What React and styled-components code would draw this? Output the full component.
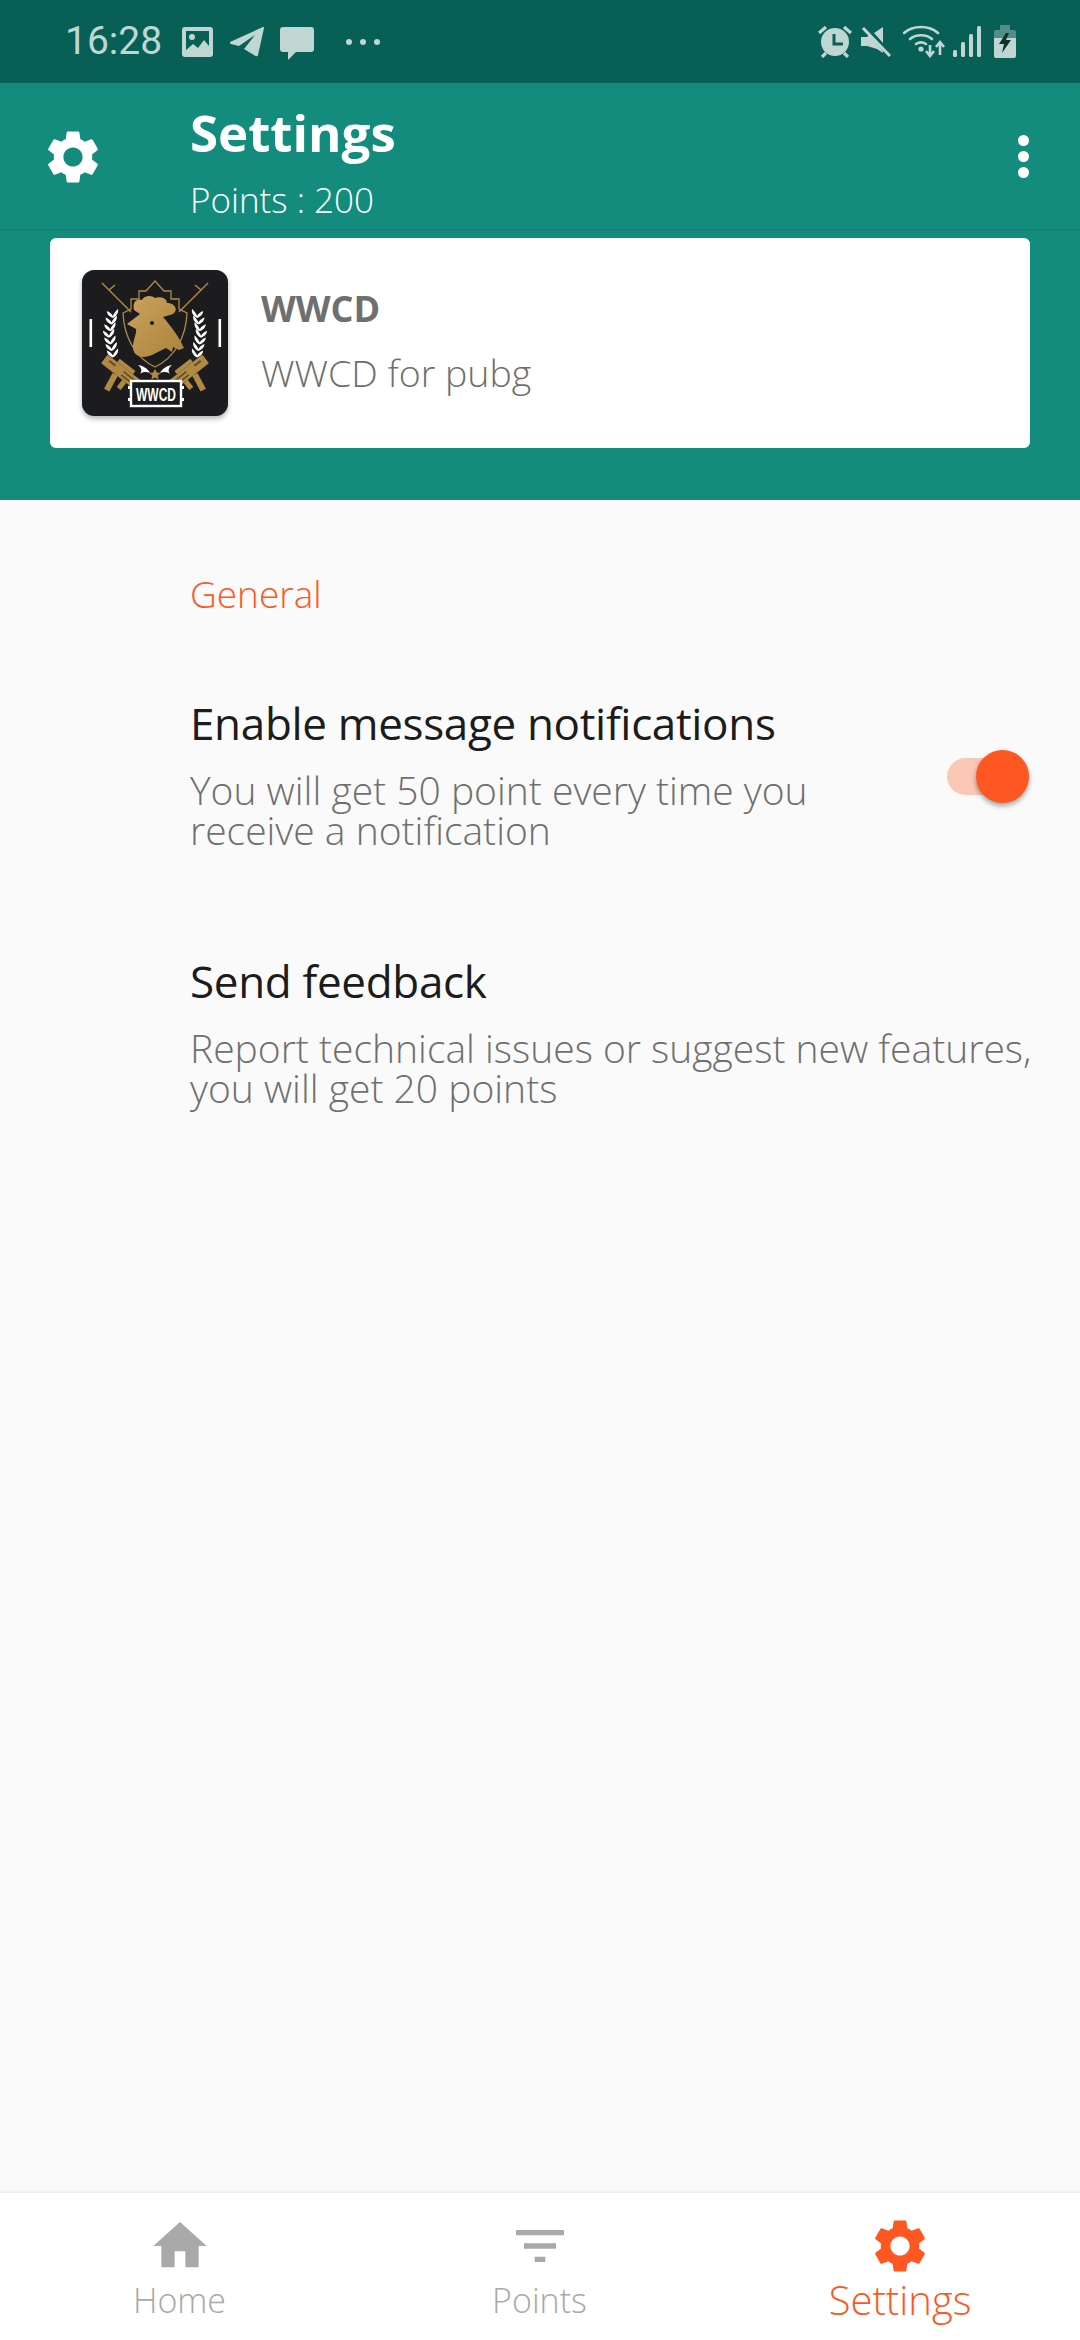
import React from "react";
import styled, { createGlobalStyle } from "styled-components";

const GlobalStyle = createGlobalStyle`
  html, body {
    margin: 0;
    padding: 0;
    background: #fafafa;
  }
  * {
    box-sizing: border-box;
  }
`;

const GEAR =
  "M19.14 12.94c.04-.3.06-.61.06-.94 0-.32-.02-.64-.07-.94l2.03-1.58c.18-.14.23-.41.12-.61l-1.92-3.32c-.12-.22-.37-.29-.59-.22l-2.39.96c-.5-.38-1.03-.7-1.62-.94l-.36-2.54c-.04-.24-.24-.41-.48-.41h-3.84c-.24 0-.43.17-.47.41l-.36 2.54c-.59.24-1.13.57-1.62.94l-2.39-.96c-.22-.08-.47 0-.59.22L2.74 8.87c-.12.21-.08.47.12.61l2.03 1.58c-.05.3-.09.63-.09.94s.02.64.07.94l-2.03 1.58c-.18.14-.23.41-.12.61l1.92 3.32c.12.22.37.29.59.22l2.39-.96c.5.38 1.03.7 1.62.94l.36 2.54c.05.24.24.41.48.41h3.84c.24 0 .44-.17.47-.41l.36-2.54c.59-.24 1.13-.56 1.62-.94l2.39.96c.22.08.47 0 .59-.22l1.92-3.32c.12-.22.07-.47-.12-.61l-2.01-1.58zM12 15.6c-1.98 0-3.6-1.62-3.6-3.6s1.62-3.6 3.6-3.6 3.6 1.62 3.6 3.6-1.62 3.6-3.6 3.6z";
const HOME = "M10 20v-6h4v6h5v-8h3L12 3 2 12h3v8z";
const FILTER = "M10 18h4v-2h-4v2zM3 6v2h18V6H3zm3 7h12v-2H6v2z";

const FONT = `"Open Sans", "Noto Sans", sans-serif`;

const Page = styled.div`
  width: 1080px;
  height: 2340px;
  display: flex;
  flex-direction: column;
  background: #fafafa;
  font-family: ${FONT};
  overflow: hidden;
`;

const StatusBar = styled.div`
  height: 83px;
  flex: none;
  background: #085f56;
  display: flex;
  align-items: center;
  justify-content: space-between;
  padding: 0 64px 0 65px;
  color: #bfd6d2;
`;

const StatusGroup = styled.div`
  display: flex;
  align-items: center;
`;

const Clock = styled.span`
  font-family: Roboto, sans-serif;
  font-size: 39px;
  font-weight: 400;
  line-height: 83px;
  width: 117px;
`;

const StatusIcon = styled.svg`
  display: block;
  flex: none;
  margin-left: ${(p) => p.$gap || 0}px;
  margin-top: ${(p) => p.$down || 0}px;
  fill: currentColor;
`;

const Toolbar = styled.header`
  height: 148px;
  flex: none;
  background: #148c7d;
  border-bottom: 2px solid #128376;
  display: flex;
  align-items: center;
  color: #fff;
`;

const ToolbarIconSlot = styled.div`
  width: 190px;
  flex: none;
  padding-left: 41px;
  padding-top: 2px;
`;

const Glyph = styled.svg`
  display: block;
  width: 64px;
  height: 64px;
  fill: currentColor;
`;

const ToolbarText = styled.div`
  flex: 1;
  display: flex;
  flex-direction: column;
  padding-top: 9px;
`;

const ToolbarTitle = styled.h1`
  margin: 0;
  font-size: 51px;
  line-height: 64px;
  font-weight: 700;
`;

const ToolbarPoints = styled.div`
  font-size: 35px;
  line-height: 44px;
  margin-top: 14px;
  font-weight: 300;
`;

const Kebab = styled.div`
  width: 58px;
  margin-right: 28px;
  display: flex;
  flex-direction: column;
  align-items: center;
  gap: 5px;
  span {
    width: 11px;
    height: 11px;
    border-radius: 50%;
    background: #fff;
  }
`;

const Hero = styled.section`
  flex: none;
  background: #148c7d;
  padding: 7px 50px 52px;
`;

const AppCard = styled.div`
  height: 210px;
  background: #fff;
  border-radius: 6px;
  display: flex;
  align-items: center;
  padding-left: 32px;
`;

const AppIcon = styled.div`
  width: 146px;
  height: 146px;
  flex: none;
  border-radius: 12px;
  background: #148c7d;
  box-shadow: 0 3px 5px rgba(0, 0, 0, 0.28);
  svg {
    display: block;
  }
`;

const AppText = styled.div`
  margin-left: 33px;
  color: #6f6f6f;
  margin-top: -4px;
`;

const AppName = styled.div`
  font-size: 36px;
  line-height: 50px;
  font-weight: 700;
`;

const AppDesc = styled.div`
  font-size: 37.5px;
  line-height: 50px;
  margin-top: 14px;
  font-weight: 300;
`;

const Content = styled.main`
  flex: 1;
  padding: 69px 51px 0 190px;
`;

const SectionLabel = styled.div`
  font-size: 37px;
  line-height: 50px;
  font-weight: 300;
  color: #ff5722;
`;

const Row = styled.div`
  display: flex;
  align-items: center;
  margin-top: ${(p) => p.$top}px;
`;

const RowText = styled.div`
  flex: 1;
  white-space: nowrap;
`;

const RowTitle = styled.div`
  font-size: 44px;
  line-height: 56px;
  color: #1c1c1c;
  font-weight: 400;
  letter-spacing: -0.33px;
`;

const RowSub = styled.div`
  margin-top: 19px;
  font-size: 39px;
  line-height: 40px;
  font-weight: 300;
  color: #6f6f6f;
`;

const Switch = styled.div`
  position: relative;
  width: 82px;
  height: 37px;
  margin-top: 8px;
  flex: none;
  border-radius: 19px;
  background: #fcc8b6;
`;

const SwitchKnob = styled.div`
  position: absolute;
  right: 0;
  top: -8px;
  width: 53px;
  height: 53px;
  border-radius: 50%;
  background: #ff5722;
  box-shadow: 0 3px 5px rgba(0, 0, 0, 0.35);
`;

const BottomNav = styled.nav`
  height: 147px;
  flex: none;
  background: #fff;
  display: grid;
  grid-template-columns: 359px 361px 360px;
  box-shadow: 0 -1px 3px rgba(0, 0, 0, 0.08);
  position: relative;
`;

const NavItem = styled.div`
  display: flex;
  flex-direction: column;
  align-items: center;
  padding-top: 21px;
  color: ${(p) => (p.$active ? "#ff5722" : "#a9a9a9")};
`;

const NavLabel = styled.span`
  font-size: ${(p) => (p.$active ? 40 : 34)}px;
  line-height: 46px;
  font-weight: 300;
  margin-top: -1px;
`;

const Laurel = () => (
  <g fill="#fff">
    {[0, 1, 2, 3, 4, 5, 6].map((i) => (
      <g key={i} transform={`translate(${27 + Math.abs(3 - i) * 1.3} ${44 + i * 6.6})`}>
        <path d="M0 4 C-5 2 -6 -1 -6 -3 C-3 -2 -1 0 0 2 C1 -1 3 -3 5 -5 C6 -2 4 2 0 4Z" />
      </g>
    ))}
  </g>
);

const Rifle = () => (
  <g fill="#b08a45">
    <path d="M20 13 L49 42" stroke="#b08a45" strokeWidth="1.5" fill="none" />
    <path d="M27 20 L33 15" stroke="#b08a45" strokeWidth="1.5" fill="none" />
    <g transform="translate(38 103) rotate(38)">
      <rect x="-21" y="-7" width="42" height="11" rx="1" />
      <rect x="-9" y="-11" width="20" height="4" />
      <rect x="-6" y="4" width="6" height="18" transform="rotate(-10 -3 4)" />
      <rect x="6" y="4" width="5" height="9" />
      <rect x="-16" y="-4" width="8" height="2" fill="#5d4a25" />
      <rect x="2" y="-4" width="14" height="1.5" fill="#5d4a25" />
      <rect x="2" y="0" width="14" height="1.5" fill="#5d4a25" />
    </g>
  </g>
);

const WwcdLogo = () => (
  <svg width="146" height="146" viewBox="0 0 146 146">
    <defs>
      <linearGradient id="gold" x1="0" y1="0" x2="1" y2="1">
        <stop offset="0" stopColor="#cda35c" />
        <stop offset="1" stopColor="#a8823e" />
      </linearGradient>
    </defs>
    <rect width="146" height="146" rx="13" fill="#1c1c1e" />
    <rect x="7.5" y="49" width="2.6" height="28" fill="#fff" />
    <rect x="136.5" y="49" width="2.6" height="28" fill="#fff" />
    <Laurel />
    <g transform="matrix(-1 0 0 1 146 0)">
      <Laurel />
      <Rifle />
    </g>
    <Rifle />
    <path
      d="M41 43 L49 39 V29 H57 V21 H64 L73 11 L82 21 H89 V29 H97 V39 L105 43 C104 68 92 88 73 97 C54 88 42 68 41 43Z"
      fill="none"
      stroke="#b08a45"
      strokeWidth="1.3"
    />
    <path
      d="M45 54 L58 44 L52 40 C50 32 55 28 60 30 C62 25 70 25 73 28 C78 26 85 28 85 33 C95 33 97 43 88 45 L81 47 C88 55 96 65 102 78 L97 80 L91 77 L90 82 L84 78 L70 85 C58 90 50 85 51 75 C52 68 55 62 54 59Z"
      fill="url(#gold)"
    />
    <circle cx="70" cy="53" r="2" fill="#1c1c1e" />
    <path d="M56 95 C62 96 66 99 68 103 C63 101 60 102 58 104 C60 101 60 98 56 95Z" fill="#fff" />
    <path d="M90 95 C84 96 80 99 78 103 C83 101 86 102 88 104 C86 101 86 98 90 95Z" fill="#fff" />
    <path d="M73 99 L74.8 102.6 L78.6 103 L75.8 105.6 L76.6 109.4 L73 107.4 L69.4 109.4 L70.2 105.6 L67.4 103 L71.2 102.6Z" fill="#b08a45" />
    <rect x="49" y="111" width="50" height="25" fill="#1c1c1e" stroke="#fff" strokeWidth="2.4" />
    <rect x="46" y="116" width="3" height="3" fill="#fff" />
    <rect x="46" y="128" width="3" height="3" fill="#fff" />
    <rect x="99" y="116" width="3" height="3" fill="#fff" />
    <rect x="99" y="128" width="3" height="3" fill="#fff" />
    <text
      x="74"
      y="131"
      textAnchor="middle"
      fontFamily="'Liberation Sans', sans-serif"
      fontSize="18"
      fontWeight="700"
      fill="#fff"
      textLength="40"
      lengthAdjust="spacingAndGlyphs"
    >
      WWCD
    </text>
  </svg>
);

const App = () => {
  return (
    <Page>
      <GlobalStyle />
      <StatusBar>
        <StatusGroup>
          <Clock>16:28</Clock>
          <StatusIcon width="31" height="30" viewBox="0 0 31 30">
            <path
              fillRule="evenodd"
              d="M3 0h25a3 3 0 0 1 3 3v24a3 3 0 0 1-3 3H3a3 3 0 0 1-3-3V3a3 3 0 0 1 3-3zm1 4v19l7-6 5 4 6-8 5 6V4z"
            />
            <circle cx="10" cy="10" r="3" />
          </StatusIcon>
          <StatusIcon $gap={17} width="34" height="31" viewBox="0 0 34 31">
            <path d="M0 16 L33 1 Q34.5 .5 34 2 L28 29 Q27.5 31 25.5 30 L14 23 L25 9 L9 20 L1 18 Q-1 17 0 16Z" />
          </StatusIcon>
          <StatusIcon $gap={16} $down={3} width="34" height="33" viewBox="0 0 34 33">
            <path d="M3 0h28a3 3 0 0 1 3 3v19a3 3 0 0 1-3 3H16l-8 8v-8H3a3 3 0 0 1-3-3V3a3 3 0 0 1 3-3z" />
          </StatusIcon>
          <StatusIcon $gap={31} width="36" height="8" viewBox="0 0 36 8">
            <circle cx="4" cy="4" r="3" />
            <circle cx="18" cy="4" r="3" />
            <circle cx="32" cy="4" r="3" />
          </StatusIcon>
        </StatusGroup>
        <StatusGroup>
          <StatusIcon width="34" height="33" viewBox="0 0 34 33">
            <circle cx="17" cy="17" r="14" />
            <path d="M16 9v10h9" fill="none" stroke="#085f56" strokeWidth="3" />
            <path d="M1 8 L8 2 M33 8 L26 2 M4 32 L8 28 M30 32 L26 28" stroke="currentColor" strokeWidth="3.2" fill="none" />
          </StatusIcon>
          <StatusIcon $gap={9} width="30" height="32" viewBox="0 0 30 32">
            <path d="M0 11h6l2-2 14 16v2l-6-4-10-3H0z" />
            <path d="M22 1v16L13 7z" />
            <path d="M2 2 L29 30" stroke="currentColor" strokeWidth="3" fill="none" />
          </StatusIcon>
          <StatusIcon $gap={12} width="42" height="33" viewBox="0 0 42 33">
            <g fill="none" stroke="currentColor" strokeWidth="2.6" strokeLinecap="round">
              <path d="M1 8 C10 0 26 0 35 8" />
              <path d="M7 14 C13 9 23 9 29 14" />
              <path d="M13 19 C16 17 20 17 23 19" />
            </g>
            <circle cx="18" cy="24" r="2.6" />
            <path d="M27 20v10M23 26l4 5 4-5M37 30V18M33 22l4-5 4 5" fill="none" stroke="currentColor" strokeWidth="2.6" />
          </StatusIcon>
          <StatusIcon $gap={8} width="28" height="31" viewBox="0 0 28 31">
            <rect x="0" y="24" width="4" height="7" rx="1.5" />
            <rect x="8" y="16" width="4" height="15" rx="1.5" />
            <rect x="16" y="8" width="4" height="23" rx="1.5" />
            <rect x="24" y="0" width="4" height="31" rx="1.5" />
          </StatusIcon>
          <StatusIcon $gap={13} width="22" height="33" viewBox="0 0 22 33">
            <path d="M6 0h10v5h4a2 2 0 0 1 2 2v6H0V7a2 2 0 0 1 2-2h4z" opacity="0.4" />
            <path d="M0 13h22v18a2 2 0 0 1-2 2H2a2 2 0 0 1-2-2z" />
            <path d="M12 8 L5 19 H10 L8 28 L17 15 H12 L15 8Z" fill="#12302c" />
          </StatusIcon>
        </StatusGroup>
      </StatusBar>

      <Toolbar>
        <ToolbarIconSlot>
          <Glyph viewBox="0 0 24 24">
            <path d={GEAR} />
          </Glyph>
        </ToolbarIconSlot>
        <ToolbarText>
          <ToolbarTitle>Settings</ToolbarTitle>
          <ToolbarPoints>Points : 200</ToolbarPoints>
        </ToolbarText>
        <Kebab>
          <span />
          <span />
          <span />
        </Kebab>
      </Toolbar>

      <Hero>
        <AppCard>
          <AppIcon>
            <WwcdLogo />
          </AppIcon>
          <AppText>
            <AppName>WWCD</AppName>
            <AppDesc>WWCD for pubg</AppDesc>
          </AppText>
        </AppCard>
      </Hero>

      <Content>
        <SectionLabel>General</SectionLabel>
        <Row $top={76}>
          <RowText>
            <RowTitle>Enable message notifications</RowTitle>
            <RowSub>
              You will get 50 point every time you
              <br />
              receive a notification
            </RowSub>
          </RowText>
          <Switch>
            <SwitchKnob />
          </Switch>
        </Row>
        <Row $top={103}>
          <RowText>
            <RowTitle>Send feedback</RowTitle>
            <RowSub>
              Report technical issues or suggest new features,
              <br />
              you will get 20 points
            </RowSub>
          </RowText>
        </Row>
      </Content>

      <BottomNav>
        <NavItem>
          <Glyph viewBox="0 0 24 24">
            <path d={HOME} />
          </Glyph>
          <NavLabel>Home</NavLabel>
        </NavItem>
        <NavItem>
          <Glyph viewBox="0 0 24 24">
            <path d={FILTER} />
          </Glyph>
          <NavLabel>Points</NavLabel>
        </NavItem>
        <NavItem $active>
          <Glyph viewBox="0 0 24 24">
            <path d={GEAR} />
          </Glyph>
          <NavLabel $active>Settings</NavLabel>
        </NavItem>
      </BottomNav>
    </Page>
  );
};

export default App;
